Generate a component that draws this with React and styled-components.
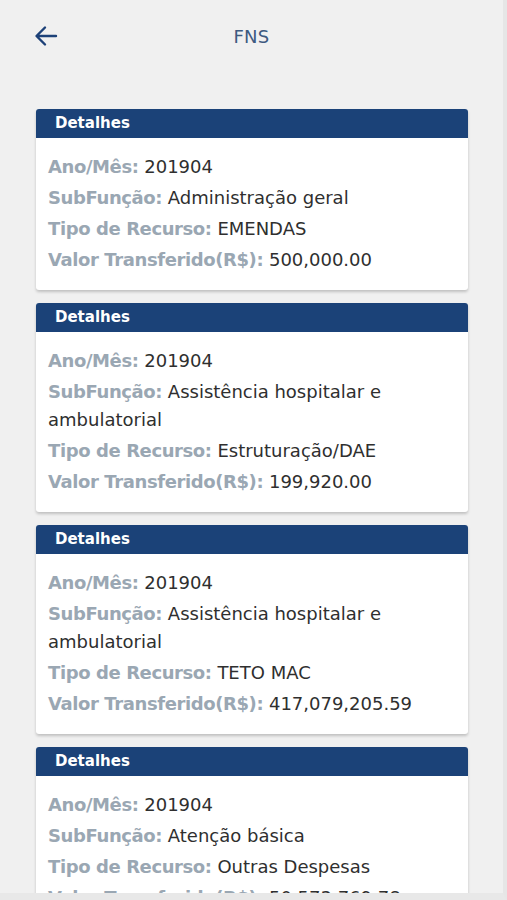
import React from 'react';
import styled, { createGlobalStyle } from 'styled-components';

const GlobalStyle = createGlobalStyle`
  html, body {
    margin: 0;
    padding: 0;
    background-color: #efefef;
    font-family: 'DejaVu Sans', 'Open Sans', sans-serif;
  }
`;

const Page = styled.div`
  width: 503px;
  height: 893px;
  overflow: hidden;
  background-color: #f0f0f0;
  border-right: 4px solid #e6e6e6;
  border-bottom: 7px solid #e8e8e8;
`;

const Header = styled.header`
  display: grid;
  grid-template-columns: 72px 1fr 72px;
  align-items: center;
  height: 72px;
`;

const BackButton = styled.button`
  display: flex;
  align-items: center;
  justify-content: center;
  background: none;
  border: none;
  padding: 0;
  margin-left: 34px;
  width: 24px;
  height: 24px;
  cursor: pointer;
`;

const Title = styled.h1`
  margin: 0;
  text-align: center;
  font-size: 18px;
  font-weight: 400;
  color: #3e5a80;
  letter-spacing: 0.3px;
`;

const List = styled.main`
  display: flex;
  flex-direction: column;
  gap: 13px;
  padding: 37px 35px 0 36px;
`;

const Card = styled.section`
  background-color: white;
  border-radius: 3px;
  box-shadow: 0 2px 3px rgba(0, 0, 0, 0.2);
  overflow: hidden;
`;

const CardHeader = styled.h2`
  margin: 0;
  height: 29px;
  line-height: 29px;
  padding: 0 19px;
  background-color: #1b4278;
  color: white;
  font-size: 15px;
  font-weight: 700;
`;

const CardBody = styled.div`
  padding: 15px 12px 16px 12px;
`;

const Field = styled.p`
  margin: 0 0 3px 0;
  font-size: 18px;
  line-height: 28px;
  color: #2f2f2f;

  &:last-child {
    margin-bottom: 0;
  }

  b {
    color: #9aa7b3;
    font-weight: 700;
    letter-spacing: -0.4px;
  }
`;

const items = [
  {
    ano: '201904',
    sub: 'Administração geral',
    tipo: 'EMENDAS',
    valor: '500,000.00',
  },
  {
    ano: '201904',
    sub: 'Assistência hospitalar e ambulatorial',
    tipo: 'Estruturação/DAE',
    valor: '199,920.00',
  },
  {
    ano: '201904',
    sub: 'Assistência hospitalar e ambulatorial',
    tipo: 'TETO MAC',
    valor: '417,079,205.59',
  },
  {
    ano: '201904',
    sub: 'Atenção básica',
    tipo: 'Outras Despesas',
    valor: '50,573,769.78',
  },
];

const ArrowLeft = () => (
  <svg width="24" height="24" viewBox="0 0 24 24" fill="none">
    <path
      d="M22 12H3M11 3.5L2.5 12L11 20.5"
      stroke="#1d4178"
      strokeWidth="2.4"
      strokeLinecap="round"
      strokeLinejoin="round"
    />
  </svg>
);

export default function App() {
  return (
    <Page>
      <GlobalStyle />
      <Header>
        <BackButton aria-label="Voltar">
          <ArrowLeft />
        </BackButton>
        <Title>FNS</Title>
        <span />
      </Header>
      <List>
        {items.map((item, i) => (
          <Card key={i}>
            <CardHeader>Detalhes</CardHeader>
            <CardBody>
              <Field>
                <b>Ano/Mês:</b> {item.ano}
              </Field>
              <Field>
                <b>SubFunção:</b> {item.sub}
              </Field>
              <Field>
                <b>Tipo de Recurso:</b> {item.tipo}
              </Field>
              <Field>
                <b>Valor Transferido(R$):</b> {item.valor}
              </Field>
            </CardBody>
          </Card>
        ))}
      </List>
    </Page>
  );
}
